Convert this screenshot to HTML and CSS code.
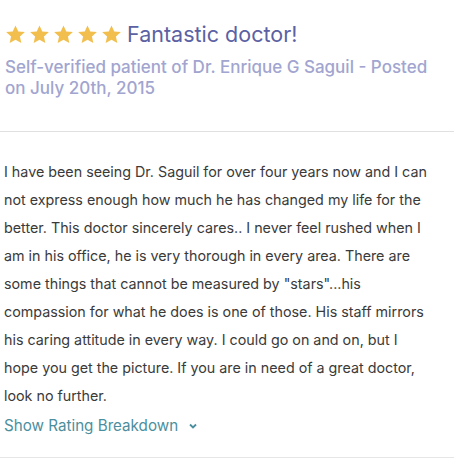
FILE: index.html
```html
<!DOCTYPE html>
<html>
<head>
  <meta charset="UTF-8">
  <title>Review</title>
  <link rel="stylesheet" href="styles.css">
</head>
<body>
  <div class="review">
    <div class="review-header">
      <div class="title-row">
        <span class="stars">
          <svg viewBox="0 0 24 24"><path d="M12 2.5l2.9 6.3 6.9.7-5.2 4.6 1.5 6.8L12 17.4l-6.1 3.5 1.5-6.8-5.2-4.6 6.9-.7z"/></svg>
          <svg viewBox="0 0 24 24"><path d="M12 2.5l2.9 6.3 6.9.7-5.2 4.6 1.5 6.8L12 17.4l-6.1 3.5 1.5-6.8-5.2-4.6 6.9-.7z"/></svg>
          <svg viewBox="0 0 24 24"><path d="M12 2.5l2.9 6.3 6.9.7-5.2 4.6 1.5 6.8L12 17.4l-6.1 3.5 1.5-6.8-5.2-4.6 6.9-.7z"/></svg>
          <svg viewBox="0 0 24 24"><path d="M12 2.5l2.9 6.3 6.9.7-5.2 4.6 1.5 6.8L12 17.4l-6.1 3.5 1.5-6.8-5.2-4.6 6.9-.7z"/></svg>
          <svg viewBox="0 0 24 24"><path d="M12 2.5l2.9 6.3 6.9.7-5.2 4.6 1.5 6.8L12 17.4l-6.1 3.5 1.5-6.8-5.2-4.6 6.9-.7z"/></svg>
        </span>
        <h2 class="title">Fantastic doctor!</h2>
      </div>
      <div class="meta">Self-verified patient of Dr. Enrique G Saguil - Posted on July 20th, 2015</div>
    </div>

    <div class="review-body">
      <p class="text">I have been seeing Dr. Saguil for over four years now and I can not express enough how much he has changed my life for the better. This doctor sincerely cares.. I never feel rushed when I am in his office, he is very thorough in every area. There are some things that cannot be measured by "stars"...his compassion for what he does is one of those. His staff mirrors his caring attitude in every way. I could go on and on, but I hope you get the picture. If you are in need of a great doctor, look no further.</p>
      <a class="breakdown" href="#">Show Rating Breakdown
        <svg viewBox="0 0 12 12"><path d="M3 4.5l3 3 3-3"/></svg>
      </a>
    </div>
  </div>
</body>
</html>
```

FILE: styles.css
```css
body {
  margin: 0;
  background-color: #fff;
  font-family: Inter, "Noto Sans", sans-serif;
  color: #333;
}
.review {
  width: 454px;
}
.review-header {
  padding: 19px 10px 0 5px;
  height: 132px;
  box-sizing: border-box;
  border-bottom: 1px solid #e0e0e0;
}
.title-row {
  display: flex;
  align-items: center;
  gap: 4px;
}
.stars {
  display: flex;
  gap: 1px;
  margin-left: -1px;
}
.stars svg {
  width: 23px;
  height: 23px;
  fill: #f2bf4f;
}
.title {
  margin: 0;
  font-size: 21.5px;
  font-weight: 400;
  color: #5b61a3;
  line-height: 30px;
}
.meta {
  margin-top: 8px;
  font-size: 17px;
  line-height: 21px;
  color: #a1a5cf;
  font-weight: 500;
}
.review-body {
  padding: 26px 23px 0 4px;
  height: 326px;
  box-sizing: border-box;
  border-bottom: 1px solid #e6e6e6;
}
.text {
  margin: 0;
  font-size: 14.3px;
  line-height: 28px;
  color: #3a3a3a;
}
.breakdown {
  display: inline-flex;
  align-items: center;
  gap: 9px;
  margin-top: 3px;
  font-size: 15.2px;
  color: #4b8f9e;
  text-decoration: none;
  line-height: 26px;
}
.breakdown svg {
  width: 12px;
  height: 12px;
  fill: none;
  stroke: #4b8f9e;
  stroke-width: 1.8;
}
```
